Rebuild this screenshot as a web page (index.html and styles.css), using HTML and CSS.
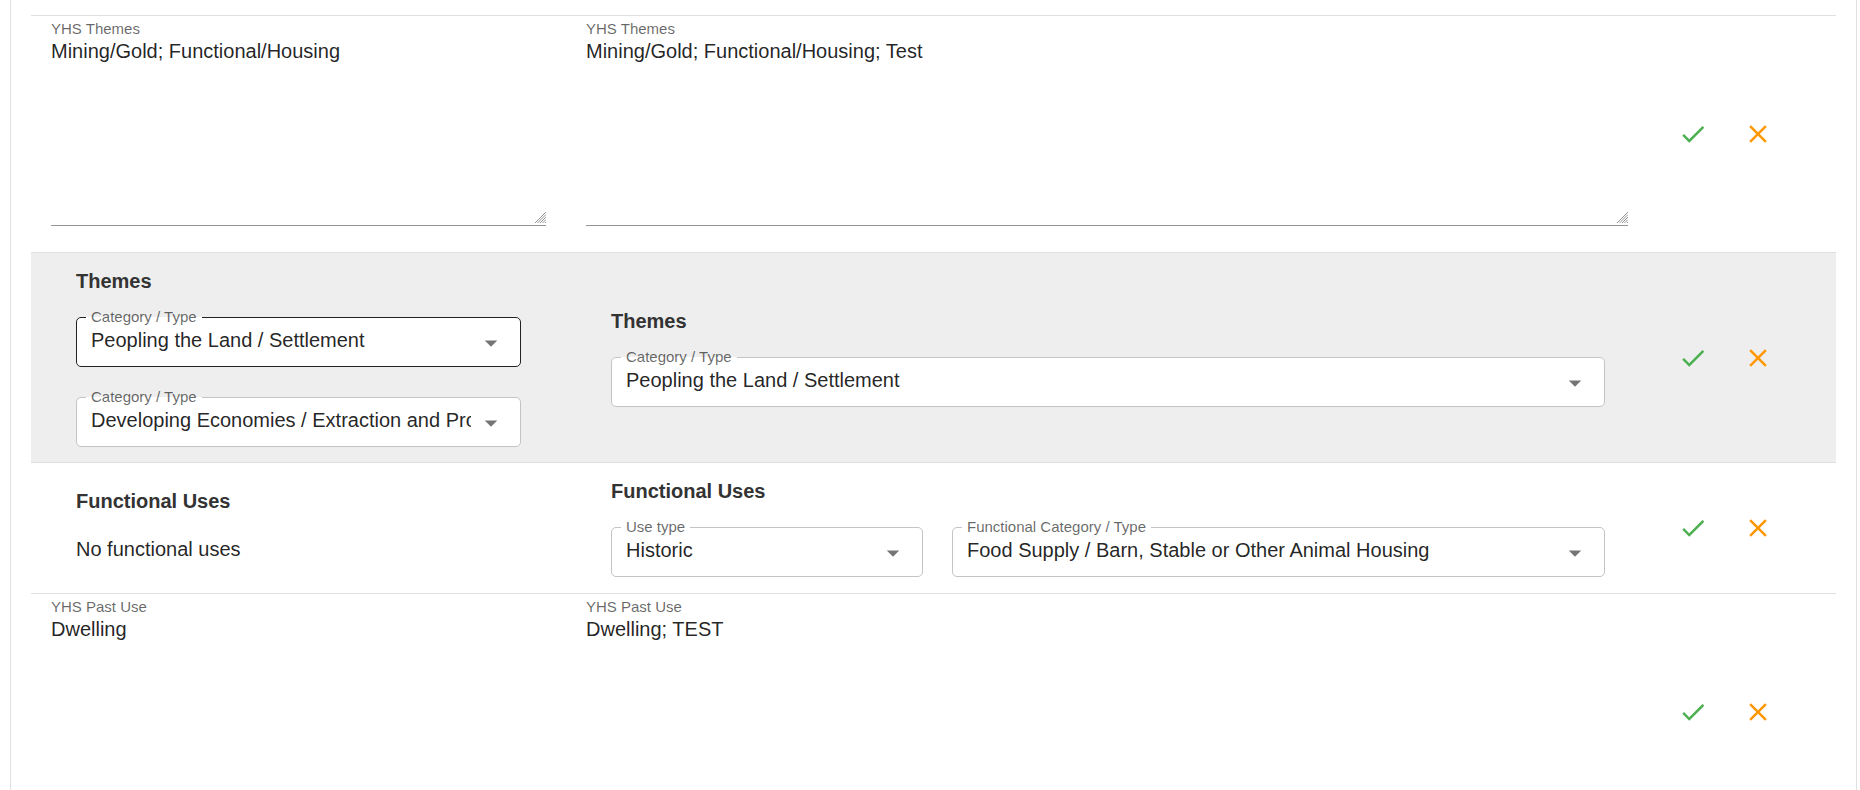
FILE: index.html
```html
<!DOCTYPE html>
<html lang="en">
<head>
<meta charset="utf-8">
<title>Review changes</title>
<link rel="stylesheet" href="styles.css">
</head>
<body>
<div class="card">

  <div class="row row-text">
    <div class="cell">
      <div class="field-label">YHS Themes</div>
      <div class="textarea">
        <div class="textarea-value">Mining/Gold; Functional/Housing</div>
        <svg class="grip" viewBox="0 0 12 12"><path d="M1 12L12 1M3.5 12L12 3.5M6 12L12 6M8.5 12L12 8.5M11 12L12 11"/></svg>
      </div>
    </div>
    <div class="cell">
      <div class="field-label">YHS Themes</div>
      <div class="textarea">
        <div class="textarea-value">Mining/Gold; Functional/Housing; Test</div>
        <svg class="grip" viewBox="0 0 12 12"><path d="M1 12L12 1M3.5 12L12 3.5M6 12L12 6M8.5 12L12 8.5M11 12L12 11"/></svg>
      </div>
    </div>
    <div class="actions">
      <button class="icon-btn ok" type="button" aria-label="Accept"><svg viewBox="0 0 24 24"><path d="M9 16.17 4.83 12l-1.42 1.41L9 19 21 7l-1.41-1.41z"/></svg></button>
      <button class="icon-btn cancel" type="button" aria-label="Reject"><svg viewBox="0 0 24 24"><path d="M19 6.41 17.59 5 12 10.59 6.41 5 5 6.410 10.59 12 5 17.59 6.41 19 12 13.41 17.59 19 19 17.59 13.41 12z"/></svg></button>
    </div>
  </div>

  <div class="row row-select row-gray">
    <div class="cell">
      <h3 class="heading">Themes</h3>
      <div class="stack">
        <div class="select active">
          <span class="select-label">Category / Type</span>
          <span class="select-value">Peopling the Land / Settlement</span>
          <svg class="arrow" viewBox="0 0 24 24"><path d="M7 10l5 5 5-5z"/></svg>
        </div>
        <div class="select">
          <span class="select-label">Category / Type</span>
          <span class="select-value">Developing Economies / Extraction and Processing</span>
          <svg class="arrow" viewBox="0 0 24 24"><path d="M7 10l5 5 5-5z"/></svg>
        </div>
      </div>
    </div>
    <div class="cell cell-right">
      <h3 class="heading">Themes</h3>
      <div class="select">
        <span class="select-label">Category / Type</span>
        <span class="select-value">Peopling the Land / Settlement</span>
        <svg class="arrow" viewBox="0 0 24 24"><path d="M7 10l5 5 5-5z"/></svg>
      </div>
    </div>
    <div class="actions">
      <button class="icon-btn ok" type="button" aria-label="Accept"><svg viewBox="0 0 24 24"><path d="M9 16.17 4.83 12l-1.42 1.41L9 19 21 7l-1.41-1.41z"/></svg></button>
      <button class="icon-btn cancel" type="button" aria-label="Reject"><svg viewBox="0 0 24 24"><path d="M19 6.41 17.59 5 12 10.59 6.41 5 5 6.41 10.59 12 5 17.59 6.41 19 12 13.41 17.59 19 19 17.59 13.41 12z"/></svg></button>
    </div>
  </div>

  <div class="row row-select row-uses">
    <div class="cell">
      <h3 class="heading">Functional Uses</h3>
      <p class="empty">No functional uses</p>
    </div>
    <div class="cell cell-right">
      <h3 class="heading">Functional Uses</h3>
      <div class="pair">
        <div class="select use-type">
          <span class="select-label">Use type</span>
          <span class="select-value">Historic</span>
          <svg class="arrow" viewBox="0 0 24 24"><path d="M7 10l5 5 5-5z"/></svg>
        </div>
        <div class="select func-type">
          <span class="select-label">Functional Category / Type</span>
          <span class="select-value">Food Supply / Barn, Stable or Other Animal Housing</span>
          <svg class="arrow" viewBox="0 0 24 24"><path d="M7 10l5 5 5-5z"/></svg>
        </div>
      </div>
    </div>
    <div class="actions">
      <button class="icon-btn ok" type="button" aria-label="Accept"><svg viewBox="0 0 24 24"><path d="M9 16.17 4.83 12l-1.42 1.41L9 19 21 7l-1.41-1.41z"/></svg></button>
      <button class="icon-btn cancel" type="button" aria-label="Reject"><svg viewBox="0 0 24 24"><path d="M19 6.41 17.59 5 12 10.59 6.41 5 5 6.41 10.59 12 5 17.59 6.41 19 12 13.41 17.59 19 19 17.59 13.41 12z"/></svg></button>
    </div>
  </div>

  <div class="row row-text">
    <div class="cell">
      <div class="field-label">YHS Past Use</div>
      <div class="textarea">
        <div class="textarea-value">Dwelling</div>
        <svg class="grip" viewBox="0 0 12 12"><path d="M1 12L12 1M3.5 12L12 3.5M6 12L12 6M8.5 12L12 8.5M11 12L12 11"/></svg>
      </div>
    </div>
    <div class="cell">
      <div class="field-label">YHS Past Use</div>
      <div class="textarea">
        <div class="textarea-value">Dwelling; TEST</div>
        <svg class="grip" viewBox="0 0 12 12"><path d="M1 12L12 1M3.5 12L12 3.5M6 12L12 6M8.5 12L12 8.5M11 12L12 11"/></svg>
      </div>
    </div>
    <div class="actions">
      <button class="icon-btn ok" type="button" aria-label="Accept"><svg viewBox="0 0 24 24"><path d="M9 16.17 4.83 12l-1.42 1.41L9 19 21 7l-1.41-1.41z"/></svg></button>
      <button class="icon-btn cancel" type="button" aria-label="Reject"><svg viewBox="0 0 24 24"><path d="M19 6.41 17.59 5 12 10.59 6.41 5 5 6.41 10.59 12 5 17.59 6.41 19 12 13.41 17.59 19 19 17.59 13.41 12z"/></svg></button>
    </div>
  </div>

</div>
</body>
</html>
```

FILE: styles.css
```css
* {
  box-sizing: border-box;
}

html,
body {
  margin: 0;
  padding: 0;
  overflow: hidden;
  background: #ffffff;
}

body {
  font-family: "Liberation Sans", Arial, Helvetica, sans-serif;
  color: rgba(0, 0, 0, 0.87);
}

.card {
  margin-left: 10px;
  width: 1847px;
  min-height: 900px;
  padding: 15px 20px 0;
  border-left: 1px solid #e0e0e0;
  border-right: 1px solid #e0e0e0;
}

.row {
  display: grid;
  grid-template-columns: 535px 1082px 1fr;
  align-items: center;
  border-top: 1px solid #e0e0e0;
}

/* text (textarea) rows */
.row-text .cell {
  align-self: start;
  padding: 0 20px 26px;
}

.field-label {
  margin-top: 3px;
  font-size: 15px;
  line-height: 20px;
  color: rgba(0, 0, 0, 0.6);
}

.textarea {
  position: relative;
  height: 187px;
  border-bottom: 1px solid #949494;
}

.textarea-value {
  font-size: 20px;
  line-height: 24px;
  color: rgba(0, 0, 0, 0.87);
}

.grip {
  position: absolute;
  right: 0;
  bottom: 2px;
  width: 12px;
  height: 12px;
  stroke: #8a8a8a;
  stroke-width: 0.9;
  fill: none;
}

/* select rows */
.row-select {
  padding: 15px 0;
}

.row-uses {
  padding-bottom: 16px;
}

.row-gray {
  background: #eeeeee;
}

.row-select .cell {
  padding: 0 45px;
}

.row-select .cell-right {
  padding: 0 43px 0 45px;
}

.heading {
  margin: 0 0 23px;
  font-size: 20px;
  line-height: 26px;
  font-weight: 700;
  color: #333333;
}

.empty {
  margin: 0 0 6px;
  font-size: 20px;
  line-height: 24px;
  color: rgba(0, 0, 0, 0.87);
}

.stack {
  display: flex;
  flex-direction: column;
  gap: 30px;
}

.pair {
  display: flex;
  gap: 29px;
}

.select {
  position: relative;
  display: flex;
  align-items: center;
  height: 50px;
  padding: 0 49px 4px 14px;
  border: 1px solid #c4c4c4;
  border-radius: 5px;
  background: #ffffff;
  font-size: 20px;
}

.select.active {
  border-color: #222222;
}

.select.use-type {
  flex: 0 0 312px;
}

.select.func-type {
  flex: 1 1 auto;
}

.select-value {
  white-space: nowrap;
  overflow: hidden;
  line-height: 24px;
  color: rgba(0, 0, 0, 0.87);
}

.select-label {
  position: absolute;
  top: -9px;
  left: 9px;
  padding: 0 5px;
  font-size: 15px;
  line-height: 16px;
  color: rgba(0, 0, 0, 0.6);
  white-space: nowrap;
  background: linear-gradient(to bottom, transparent 8px, #ffffff 8px);
}

.arrow {
  position: absolute;
  right: 14px;
  top: 50%;
  width: 30px;
  height: 30px;
  margin-top: -14px;
  fill: rgba(0, 0, 0, 0.54);
}

/* actions */
.actions {
  display: flex;
  gap: 15px;
  padding-left: 20px;
}

.icon-btn {
  width: 50px;
  height: 50px;
  padding: 10px;
  margin: 0;
  border: none;
  background: transparent;
  border-radius: 50%;
  cursor: pointer;
}

.icon-btn svg {
  display: block;
  width: 30px;
  height: 30px;
}

.icon-btn.ok svg {
  fill: #4caf50;
}

.icon-btn.cancel svg {
  fill: #ff9800;
}
```
